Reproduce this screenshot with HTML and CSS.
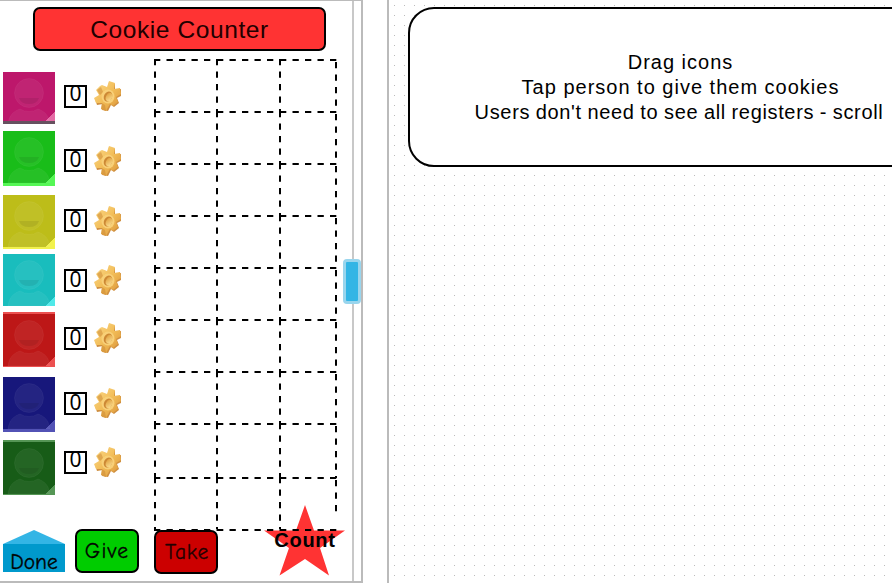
FILE: index.html
```
<!DOCTYPE html>
<html lang="en">
<head>
<meta charset="utf-8">
<title>Cookie Counter</title>
<link rel="stylesheet" href="styles.css">
</head>
<body>
<svg class="defs" aria-hidden="true">
  <defs>
    <linearGradient id="gold" x1="0" y1="0" x2="1" y2="1">
      <stop offset="0" stop-color="#fbd98a"/><stop offset=".5" stop-color="#f2bd58"/><stop offset="1" stop-color="#d89035"/>
    </linearGradient>
    <linearGradient id="goldLight" x1="0" y1="0" x2="1" y2="1">
      <stop offset="0" stop-color="#dd9a35"/><stop offset="1" stop-color="#fde39a"/>
    </linearGradient>
    <symbol id="person" viewBox="0 0 52 52">
      <g fill="#fff" fill-opacity=".06" stroke="#fff" stroke-opacity=".04">
        <circle cx="26" cy="21" r="14.5"/>
        <path d="M5 52C6 43 11 39 17 37Q26 42 35 37C41 39 46 43 47 52Z"/>
      </g>
      <path d="M16 26H36Q34 32 26 32T16 26Z" fill="#000" fill-opacity=".08"/>
    </symbol>
    <symbol id="gear" viewBox="0 0 28 31">
      <path d="M9 5L14 7L15 1L21 3L21 9L27 8L27 15L23 17L25 22L20 26L17 24L14 30L8 29L9 23L3 24L1 18L6 14L3 9L7 5Z" fill="#cf8f40"/>
      <path d="M8 4L13 6L15 0L21 2L20 8L26 7L27 13L22 16L24 21L19 25L16 23L12 30L7 28L8 22L2 22L0 17L5 14L2 9L6 5Z" fill="url(#gold)"/>
      <path d="M3 9L7 6L9 11L6 14ZM8 22L11 24L12 30L7 28Z" fill="#c98632" fill-opacity=".5"/>
      <ellipse cx="14" cy="15.5" rx="6.5" ry="7" fill="#f8d078"/>
      <ellipse cx="14" cy="15.5" rx="4" ry="5.3" transform="rotate(25 14 15.5)" fill="#cc8835"/>
      <ellipse cx="15" cy="16" rx="3" ry="4.4" transform="rotate(25 15 16)" fill="url(#goldLight)"/>
    </symbol>
  </defs>
</svg>
<main class="workspace">
  <section class="phone">
    <h1 class="title">Cookie Counter</h1>
    <div class="content">
      <div class="people">
        <div class="person pink"><svg class="avatar"><use href="#person" height="52"/></svg><b class="score high">0</b><svg class="gear"><use href="#gear"/></svg></div>
        <div class="person green"><svg class="avatar"><use href="#person" height="52"/></svg><b class="score">0</b><svg class="gear"><use href="#gear"/></svg></div>
        <div class="person yellow"><svg class="avatar"><use href="#person" height="52"/></svg><b class="score">0</b><svg class="gear"><use href="#gear"/></svg></div>
        <div class="person cyan"><svg class="avatar"><use href="#person" height="52"/></svg><b class="score">0</b><svg class="gear"><use href="#gear"/></svg></div>
        <div class="person red"><svg class="avatar"><use href="#person" height="52"/></svg><b class="score">0</b><svg class="gear"><use href="#gear"/></svg></div>
        <div class="person navy"><svg class="avatar"><use href="#person" height="52"/></svg><b class="score">0</b><svg class="gear"><use href="#gear"/></svg></div>
        <div class="person forest"><svg class="avatar"><use href="#person" height="52"/></svg><b class="score high">0</b><svg class="gear"><use href="#gear"/></svg></div>
      </div>
      <svg class="registers" viewBox="0 0 184 472">
        <path d="M0 1h63M63 1h63M126 1h57M0 53h63M63 53h63M126 53h57M0 105h63M63 105h63M126 105h57M0 157h63M63 157h63M126 157h57M0 209h63M63 209h63M126 209h57M0 261h63M63 261h63M126 261h57M0 313h63M63 313h63M126 313h57M0 365h63M63 365h63M126 365h57M0 419h63M63 419h63M126 419h57M0 471h63M63 471h63M126 471h57"/>
        <path d="M1 0v52M1 52v52M1 104v52M1 156v52M1 208v52M1 260v52M1 312v52M1 364v54M1 418v52M63 0v52M63 52v52M63 104v52M63 156v52M63 208v52M63 260v52M63 312v52M63 364v54M63 418v52M126 0v52M126 52v52M126 104v52M126 156v52M126 208v52M126 260v52M126 312v52M126 364v54M126 418v52"/>
        <path d="M182 3v50M182 55v50M182 107v50M182 159v50M182 211v50M182 263v50M182 315v50M182 367v52M182 421v37"/>
      </svg>
    </div>
    <div class="actions">
      <div class="done"><span>Done</span></div>
      <div class="button give">Give</div>
      <div class="button take">Take</div>
      <div class="count">
        <svg class="star" viewBox="0 0 82 71"><path d="M41 0L50 25.500H81L56 43L65 70.500L41 54L15.500 70.500L25 43L0 25.500H32Z" fill="#f33"/></svg>
        <span>Count</span>
      </div>
    </div>
    <div class="track"></div>
    <div class="thumb"></div>
  </section>
  <section class="canvas">
    <div class="note">
      <p class="line drag">Drag icons</p>
      <p class="line tap">Tap person to give them cookies</p>
      <p class="line users">Users don't need to see all registers - scroll</p>
    </div>
  </section>
</main>
</body>
</html>
```
FILE: styles.css
```
* { box-sizing: border-box; }
body { margin: 0; background: #fff; color: #000; font-family: "Liberation Sans", Arial, sans-serif; overflow: hidden; }
.defs { position: absolute; width: 0; height: 0; }
.workspace { display: flex; width: 892px; height: 583px; overflow: hidden; }

.phone {
  position: relative; flex: none; width: 363px; height: 583px; margin-right: 24px; padding-top: 6px;
  border: solid #bbb; border-width: 1px 2px 2px 0;
}
.title {
  width: 293px; height: 44px; margin: 0 0 8px 33px;
  border: 2px solid #000; border-radius: 7px; background: #f33;
  font-size: 24.5px; font-weight: 400; line-height: 41px; text-align: center; letter-spacing: .6px; color: #200;
}
.content { display: flex; height: 472px; }
.people { flex: none; width: 154px; padding: 13px 0 0 3px; }

.person { display: flex; align-items: flex-start; height: var(--pitch); --offset: 15px; --lift: 4px; }
.avatar {
  flex: none; width: 52px; height: 55px; border: 0 solid var(--edge);
  background: linear-gradient(135deg, transparent calc(100% - 7px), var(--edge) calc(100% - 7px)), var(--shade);
}
.score {
  flex: none; width: 23px; height: 23px; margin: var(--offset) 0 0 9px; border: 2px solid #000;
  font: 400 21px/17px "Noto Sans", sans-serif; text-align: center;
}
.score.high { line-height: 13px; }
.gear { flex: none; width: 28px; height: 31px; margin: calc(var(--offset) - var(--lift)) 0 0 7px; }

.pink { --pitch: 59px; --offset: 13px; --shade: #bd176b; --edge: #e56aa5; }
.pink .avatar { height: 52px; border-bottom: 3px solid #66505f; }
.green { --pitch: 64px; --offset: 18px; --lift: 3px; --shade: #19bd19; --edge: #55f755; }
.green .avatar { border-bottom-width: 3px; }
.yellow { --pitch: 59px; --offset: 14px; --lift: 3px; --shade: #bdbd19; --edge: #f2f24c; }
.yellow .avatar { height: 54px; border-bottom-width: 2px; }
.cyan { --pitch: 58px; --shade: #19bdbd; --edge: #4fe9e9; }
.cyan .avatar { height: 52px; }
.red { --pitch: 65px; --shade: #bd1717; --edge: #ec5050; }
.red .avatar { border-width: 2px 0 1px; }
.navy { --pitch: 63px; --shade: #17177b; --edge: #5252b5; }
.navy .avatar { border-bottom-width: 3px; }
.forest { --pitch: 55px; --offset: 11px; --shade: #175c17; --edge: #559655; }
.forest .avatar { border-width: 2px 0 1px; }

.registers { position: relative; z-index: 1; flex: none; width: 184px; height: 472px; fill: none; stroke: #000; stroke-width: 2; stroke-dasharray: 6.3 6.2; }

.actions { display: flex; align-items: flex-start; height: 52px; padding-left: 3px; font-family: "Comic Sans MS", "Comic Neue", "Noto Sans", sans-serif; font-size: 21.5px; color: #020202; -webkit-text-stroke: .3px currentColor; }
.done {
  width: 62px; height: 42px; margin-top: -1px; padding-top: 14px; text-align: center; line-height: 37px;
  background: linear-gradient(#33b5e5 0 14px, #09c 14px);
  clip-path: polygon(50% 0, 100% 14px, 100% 100%, 0 100%, 0 14px);
}
.button { width: 64px; height: 44px; border: 2px solid #000; border-radius: 7px; line-height: 41px; text-align: center; }
.give { margin: -2px 0 0 10px; background: #0c0; letter-spacing: 1.2px; }
.take { margin: -1px 0 0 15px; padding-left: 2px; background: #c00; letter-spacing: .8px; color: #200; }
.count { display: grid; width: 82px; height: 71px; margin: -26px 0 0 46px; -webkit-text-stroke: 0; }
.count > * { grid-area: 1 / 1; }
.star { width: 82px; height: 71px; }
.count span { align-self: start; justify-self: center; margin-top: 24px; font: bold 20px/23px "Liberation Sans", Arial, sans-serif; letter-spacing: .7px; }

.track { position: absolute; top: 0; right: 7px; width: 2px; height: 580px; background: #c8c8c8; }
.thumb { position: absolute; z-index: 2; top: 258px; left: 343px; width: 18px; height: 45px; border: 3px solid #99d5ed; border-radius: 4px; background: #33b5e5; }

.canvas {
  flex: 1; min-width: 0; height: 583px; padding: 7px 0 0 19px; border-left: 2px solid #bbb; overflow: hidden;
  background: radial-gradient(circle at .5px .5px, #bbb 0 .7px, transparent .8px) 5px 5px / 10px 10px;
}
.note {
  width: 545px; height: 160px; padding-top: 41px; border: 2px solid #000; border-radius: 26px; background: #fff;
  font-size: 20px; line-height: 25px; text-align: center; white-space: nowrap;
}
.line { margin: 0; }
.drag { letter-spacing: 1px; }
.tap { letter-spacing: 1px; }
.users { margin-right: 3px; letter-spacing: .65px; word-spacing: -.5px; }
```
